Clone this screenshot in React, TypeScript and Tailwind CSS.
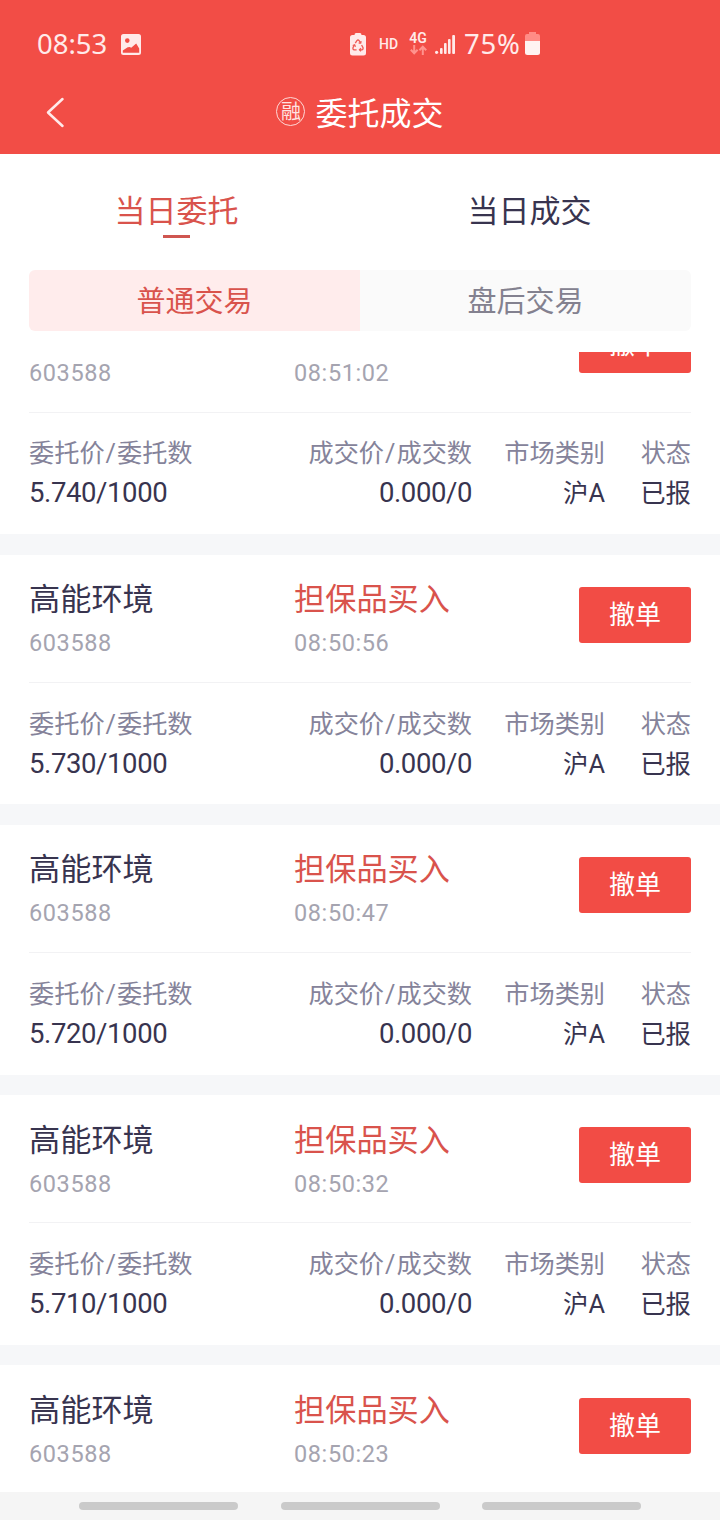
type Order = {
  name?: string
  code: string
  side?: string
  time: string
  price?: string
}

// the list is a window onto a longer scroll, so the outer orders are partial
const orders: Order[] = [
  { code: '603588', time: '08:51:02', price: '5.740/1000' },
  { name: '高能环境', code: '603588', side: '担保品买入', time: '08:50:56', price: '5.730/1000' },
  { name: '高能环境', code: '603588', side: '担保品买入', time: '08:50:47', price: '5.720/1000' },
  { name: '高能环境', code: '603588', side: '担保品买入', time: '08:50:32', price: '5.710/1000' },
  { name: '高能环境', code: '603588', side: '担保品买入', time: '08:50:23' },
]

function StatusBar() {
  return (
    <div className="flex h-[88px] items-center pl-[37px] font-['Noto_Sans',sans-serif] text-[#ffeaea]">
      <span className="w-[84px] text-[27.5px] leading-none">08:53</span>
      <svg width="20" height="21" viewBox="0 0 20 21">
        <path
          fill="currentColor"
          fillRule="evenodd"
          d="M2.500 0h15A2.500 2.500 0 0 1 20 2.500v16a2.500 2.500 0 0 1-2.500 2.500h-15A2.500 2.500 0 0 1 0 18.500v-16A2.500 2.500 0 0 1 2.500 0zM6.300 4.300a2.300 2.300 0 1 0 0 4.600 2.300 2.300 0 0 0 0-4.600zM1.800 18.800h16.400v-4.300l-3-5-5 4.200-1.500-.7-2 .2-4.900 3.300z"
        />
      </svg>
      <svg className="mt-px ml-[209px]" width="16" height="23" viewBox="0 0 16 23">
        <path fill="currentColor" d="M6 0h4q1.500 0 1.500 2h2A2.500 2.500 0 0 1 16 4.500v15.500a2.500 2.500 0 0 1-2.500 2.500h-11A2.500 2.500 0 0 1 0 20V4.500A2.500 2.500 0 0 1 2.500 2h2Q4.500 0 6 0z" />
        <g fill="none" stroke="#ef5b55" strokeWidth="1.300">
          <path d="M5.300 10.200 6.900 7.700q1.100-1.400 2.200 0l1.300 2M11.600 12l1.400 2.600q.5 1.900-1.300 2.200H9.500M6.600 16.800H4.300q-1.800-.3-1.300-2.200L4.300 12" />
          <path d="m8.700 10 2 .1.400-2M11 15.300l-1.500 1.500 1.500 1.500M2.700 12.500l1.900-.7.900 1.900" />
        </g>
      </svg>
      <span className="ml-[13px] w-[30px] font-['Roboto',sans-serif] text-[14px] leading-none font-medium">HD</span>
      <div className="-mt-[3px] flex w-[18px] flex-col items-center">
        <span className="font-['Roboto',sans-serif] text-[14px] leading-[14px] font-semibold">4G</span>
        <svg width="17" height="10" viewBox="0 0 17 10" fill="none" stroke="#ff938d" strokeWidth="2">
          <path d="M4.200 0v8M.8 4.800l3.400 3.500 3.400-3.500M12.800 10V2M9.400 5.200l3.400-3.500 3.400 3.500" />
        </svg>
      </div>
      <svg className="ml-[8px]" width="21" height="20" viewBox="0 0 21 20" fill="currentColor">
        <circle cx="1.600" cy="18.300" r="1.600" />
        <rect x="5" y="14" width="2.600" height="6" rx="1" />
        <rect x="9" y="9" width="2.600" height="11" rx="1" />
        <rect x="13" y="5" width="2.600" height="15" rx="1" />
        <rect x="17.200" y="1" width="2.800" height="19" rx="1" />
      </svg>
      <span className="ml-[8px] w-[61px] text-[27.5px] leading-none tracking-[0.8px]">75%</span>
      <svg className="-mt-px" width="15" height="23" viewBox="0 0 15 23">
        <path fill="#ff8c86" d="M4 0h7v2h2a2 2 0 0 1 2 2v6H0V4a2 2 0 0 1 2-2h2z" />
        <path fill="#fff3f2" d="M0 9h15v11.500a2.500 2.500 0 0 1-2.500 2.500h-10A2.500 2.500 0 0 1 0 20.500z" />
      </svg>
    </div>
  )
}

function TitleBar() {
  return (
    <div className="grid h-[66px] grid-cols-[1fr_auto_1fr] items-start text-white">
      <svg className="mt-[9px] ml-[45px]" width="20" height="31" viewBox="0 0 20 31" fill="none" stroke="#ffeaea" strokeWidth="2.500" strokeLinecap="round" strokeLinejoin="round">
        <path d="M17.500 2 3 15.500 17.500 29" />
      </svg>
      <div className="flex items-start">
        <span className="mt-[9px] mr-[10px] flex size-[29px] items-center justify-center rounded-full border-[1.5px] border-[#ffd9d7] text-[20px] leading-none text-[#ffe4e2]">
          融
        </span>
        <h1 className="mt-[2px] text-[32px] leading-[48px]">委托成交</h1>
      </div>
    </div>
  )
}

function Label({ text }: { text: string }) {
  const [first, second] = text.split('/')
  return (
    <div className="text-[25.2px] leading-[40px] text-[#85839a]">
      {first}
      {second && <span className="mx-px">/</span>}
      {second}
    </div>
  )
}

function OrderCard({ order }: { order: Order }) {
  const columns = [
    { label: '委托价/委托数', value: order.price },
    { label: '成交价/成交数', value: '0.000/0' },
    { label: '市场类别', value: '沪A' },
    { label: '状态', value: '已报' },
  ]

  return (
    <div className="h-[249.4px] shrink-0 bg-white px-[29px]">
      <div className="flex h-[128px] border-b border-[#f2f2f4]">
        <div className="w-[265px] pt-[24.3px]">
          <div className="h-[42px] text-[31.2px] leading-[42px] text-[#38344f]">{order.name}</div>
          <div className="mt-[4px] text-[23.5px] leading-[36px] tracking-[0.6px] text-[#a5a4b0]">{order.code}</div>
        </div>
        <div className="flex-1 pt-[24.3px]">
          <div className="h-[42px] text-[31.2px] leading-[42px] text-[#d9534c]">{order.side}</div>
          <div className="mt-[4px] text-[23.5px] leading-[36px] tracking-[0.6px] text-[#a5a4b0]">{order.time}</div>
        </div>
        <button className="mt-[32.1px] h-[56px] w-[112px] rounded-[3px] bg-[#f24c45] text-[26px] leading-none text-white">
          撤单
        </button>
      </div>
      {order.price && (
        <div className="grid grid-cols-[200px_243px_133px_86px] pt-[21.5px] text-right">
          {columns.map((column) => (
            <div key={column.label} className="first:text-left">
              <Label text={column.label} />
              <div className="-mt-px h-[40px] text-[25.4px] leading-[40px] text-[#38344f]">
                {/* digits run slightly larger and tighter than the Chinese text */}
                {/^\d/.test(column.value ?? '') ? (
                  <span className="text-[27.5px] tracking-[-0.4px]">{column.value}</span>
                ) : (
                  column.value
                )}
              </div>
            </div>
          ))}
        </div>
      )}
    </div>
  )
}

export default function App() {
  return (
    <div className="flex h-[1520px] w-[720px] flex-col overflow-hidden bg-white font-['Roboto','Noto_Sans_CJK_SC',sans-serif]">
      <header className="h-[154px] bg-[#f24d46]">
        <StatusBar />
        <TitleBar />
      </header>

      <nav className="flex h-[116px] pr-[14px] text-[31px]">
        <div className="flex flex-1 flex-col items-center pt-[37px] text-[#d9534c]">
          <span className="leading-[42px]">当日委托</span>
          <span className="mt-[2px] h-[3px] w-[27px] bg-[#cf5650]" />
        </div>
        <div className="flex flex-1 flex-col items-center pt-[37px] text-[#38344f]">
          <span className="leading-[42px]">当日成交</span>
        </div>
      </nav>

      <div className="mx-[29px] flex h-[61px] overflow-hidden rounded-[6px] text-center text-[29px] leading-[43px]">
        <div className="flex-1 bg-[#ffecec] pt-[11px] text-[#d9534c]">普通交易</div>
        <div className="flex-1 bg-[#fafafa] pt-[11px] text-[#83818f]">盘后交易</div>
      </div>

      <div className="mt-[21px] flex min-h-0 flex-1 flex-col overflow-hidden">
        {/* list is scrolled part way through the first order */}
        <div className="-mt-[67.1px] flex flex-col gap-[20.75px] bg-[#f6f7f9]">
          {orders.map((order) => (
            <OrderCard key={order.time} order={order} />
          ))}
        </div>
      </div>

      <div className="flex h-[28px] items-center justify-center gap-[42.5px] bg-[#f5f5f5]">
        <span className="h-[8px] w-[159px] rounded-full bg-[#cacaca]" />
        <span className="h-[8px] w-[159px] rounded-full bg-[#cacaca]" />
        <span className="h-[8px] w-[159px] rounded-full bg-[#cacaca]" />
      </div>
    </div>
  )
}
